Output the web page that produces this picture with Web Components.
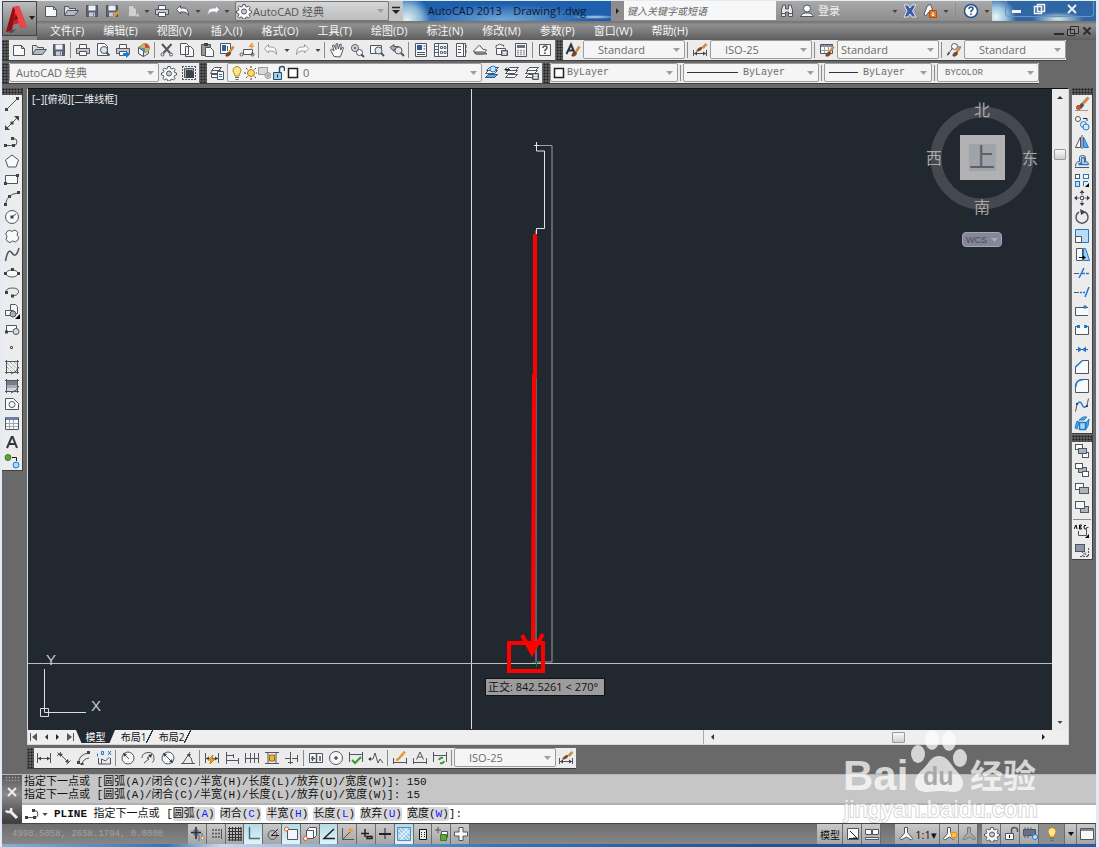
<!DOCTYPE html>
<html lang="zh-CN">
<head>
<meta charset="utf-8">
<title>AutoCAD 2013 Drawing1.dwg</title>
<style>
  html, body { margin: 0; height: 100%; }
  body { background: #e3ebf6; font-family: "Open Sans", "Noto Sans CJK SC", sans-serif; font-size: 11px; color: #222; }
</style>
</head>
<body>
<cad-app></cad-app>

<script>
const D = 'fill="#3d424c" stroke="none"';
const W = 'fill="#f8f9fa"';
const G = 'fill="#a9adb5"';
const B = 'stroke="#1c7ad0"';
const page = `<path ${W} d="M2.500 3.500h8l3 3v7h-11z"/><path d="M10.500 3.500v3h3"/>`;
const brush = `<path d="M14.500 4.500l-4 6" stroke="#c98a4a" stroke-width="2.500"/><path d="M7 14c0-3 2-4 4-3.500 1 2-1 4-4 3.500z" fill="#8a4a1c" stroke="#6d3813"/>`;
const gear = `<path ${W} d="M6.800 1.500h2.400l.4 1.900 1.300.6 1.700-1 1.500 1.600-1 1.700.5 1.200 2 .5v2l-2 .5-.5 1.200 1 1.700-1.500 1.600-1.700-1-1.300.6-.4 1.400H6.800l-.4-1.500-1.300-.6-1.700 1-1.500-1.500 1-1.700-.5-1.200-1.900-.5V8l1.900-.5.5-1.200-1-1.700 1.500-1.600 1.700 1 1.300-.6z"/><circle cx="8" cy="8.500" r="2.500" fill="#c9ccd1"/>`;
const dim = `<path d="M1.500 3v10M14.500 3v10M2 8.500h12"/><path ${D} d="M2 8.500l3-2v4zM14 8.500l-3-2v4z"/>`;
const lens = (x, y) => `<circle cx="${x}" cy="${y}" r="3.500" fill="#dfe6ee"/><path d="M${x + 2.5} ${y + 2.5}l3 3" stroke-width="2"/>`;
const floppy = `<path d="M2.500 2.500h11v11h-11z" fill="#596273"/><path d="M4.500 2.500h7v5h-7z" fill="#eef1f5" stroke="none"/><path d="M5 9.500h6v4H5z" fill="#c8ced8" stroke="none"/><path d="M9.500 10.500v2"/>`;
const printer = `<path ${W} d="M4.500 2.500h7v4h-7z"/><path d="M1.500 6.500h13v5h-13z" fill="#c5c8ce"/><path ${W} d="M4.500 9.500h7v4h-7z"/>`;
const undo = `<path ${W} d="M1.500 6.500l4-4v2.500h3.500q4.500 0 4.500 7.500-1-3-4.500-3.500h-3.500v2z"/>`;
const redo = `<path ${W} d="M14.500 6.500l-4-4v2.500h-3.500q-4.500 0-4.500 7.500 1-3 4.500-3.500h3.500v2z"/>`;
const layers = `<path ${W} d="M5.500 2.500h9l-3 3h-9zM4.500 5.500h9l-3 3h-9zM4.500 9.500h9l-3 3h-9z"/>`;
const sq = (x, y, w, h, f) => `<rect x="${x}.5" y="${y}.5" width="${w}" height="${h}" fill="${f}"/>`;

const ICONS = {
  new: page,
  open: `<path d="M1.500 12.500v-9h4l1 2h6v2" fill="#d9dce1"/><path d="M1.500 12.500l3-5h11l-4 5z" fill="#b3bac6"/>`,
  save: floppy,
  saveas: floppy + `<path d="M14.500 8l-5 6" stroke="#e19a35" stroke-width="2.500"/>`,
  plotgrey: `<path d="M3.500 13.500v-11h4l4 4v7z" fill="#d0d0d0" stroke="#999"/><path d="M10.500 13.500l2-4 2 4z" stroke="#aaa" fill="#ddd"/>`,
  print: printer, undo, redo,
  undooff: `<g stroke="#9a9da3">${undo}</g>`, redooff: `<g stroke="#9a9da3">${redo}</g>`,
  preview: `<path ${W} d="M2.500 1.500h7l3 3v9h-10z"/>` + lens(9, 8),
  publish: printer + `<path d="M8 11h3v-2l4 3.500-4 3.500v-2H8z" fill="#1c7ad0" stroke="none"/>`,
  dwf: `<path d="M3.500 5.500l5-3 5 3v6l-5 3-5-3z" fill="#e4e7ea"/><circle cx="10" cy="6" r="4.500" fill="#d8b24a" stroke="#8a8"/><path d="M10 1.500v4.500h4.500a4.500 4.500 0 0 0-4.500-4.500" fill="#d94b3a" stroke="none"/><path d="M6 6h4v4.500A4.500 4.500 0 0 1 6 6" fill="#3f9ad0" stroke="none"/><path d="M3.500 5.500v6l5 3V9z" ${W}/>`,
  cut: `<path d="M3 2l8 9M12.500 2L4.500 11" stroke-width="2"/><circle cx="3.500" cy="12.500" r="1.500"/><circle cx="12" cy="12.500" r="1.500"/>`,
  copy: `<path ${W} d="M1.500 1.500h6l2 2v9h-8zM6.500 4.500h5l3 3v7h-8z"/>`,
  paste: `<path d="M2.500 2.500h9v11h-9z" fill="#a09683"/><path d="M5 1h4v3H5z" ${D}/><path ${W} d="M6.500 5.500h5l3 3v6h-8z"/>`,
  match: `<path d="M1.500 1.500h10v10h-10z" ${W}/><path d="M3 3h4v6H3z" fill="#31649f" stroke="none"/><path d="M8.500 4v5"/>` + brush,
  block: `<path ${W} d="M4.500 7.500h9v5h-9z"/><circle cx="2.500" cy="12.500" r="1.500"/><circle cx="13.500" cy="12.500" r="1.500"/><path d="M12.500 1l-3 4h3l-2 3.500 5-5h-3l2-2.500z" fill="#f0962a" stroke="none"/>`,
  pan: `<path ${W} d="M5 14.500L1.500 8l1-1L5 9 3.500 3.500l1.500-.5 2 4.500V2l1.500-.5.8 5.500 1.700-5 1.300.5-.8 5.500 2-3 1 .7-2 6.300-1.500 3z"/>`,
  zoomrt: lens(6, 6) + `<path d="M4.500 6h3M6 4.500v3" /><circle cx="10.500" cy="10.500" r="3" ${W}/><path d="M12.500 12.500l2.500 2.500" stroke-width="2"/>`,
  zoomwin: `<path ${W} d="M1.500 3.500h11v8h-11z"/>` + lens(9.500, 8.500),
  zoomprev: `<path ${G} d="M1 5.500l4-3v2h5v3H5v2z"/>` + lens(9.500, 8.500),
  props: `<path ${W} d="M2.500 1.500h11v13h-11z"/><path d="M4 3h5v5H4z" fill="#2d5c96" stroke="none"/><path d="M10.500 4h2M10.500 7h2M4 10.500h8M4 12.500h8"/>`,
  dc: `<path ${W} d="M1.500 1.500h13v13h-13z"/><path d="M5.500 2v12M7.500 4.500h2v2h-2zM11 4.500h2v2h-2zM7.500 9.500h2v2h-2zM11 9.500h2v2h-2zM2 4.500h3M2 7.500h3M2 10.500h3" stroke="#59677c"/>`,
  palettes: `<path ${W} d="M3.500 1.500h9v13h-9z"/><path d="M10.500 2v12M5 4.500h3M5 7.500h3M5 10.500h3M13 3v3M13 8v3"/>`,
  sheets: `<path d="M2.500 7l4-4 3 4 4 1-3 4h-8l-2-3z" ${W}/><path d="M1 10h10l3 2H4z" ${G}/>`,
  markup: `<path d="M3 6q-1-3 2-3 2-2 3 0 3-1 3 2" ${W}/><path ${W} d="M3.500 6.500h9v6h-9z"/><path d="M8.500 8.500h6v5h-6z" ${G}/><path d="M10 10.500h3M10 12h3" stroke="#fff"/>`,
  calc: `<path ${W} d="M2.500 1.500h11v13h-11z"/><path d="M4 3h8v3H4z" fill="#68707e" stroke="none"/><path d="M4.500 8.500h1M7.500 8.500h1M10.500 8.500h1M4.500 10.500h1M7.500 10.500h1M10.500 10.500h1M4.500 12.500h1M7.500 12.500h1M10.500 12.500h1" stroke-width="1.500"/>`,
  help: `<path ${W} d="M2.500 2.500h11v11h-11z"/><path d="M6 6q0-2 2-2t2 1.700q0 1-2 2.500v1" stroke-width="1.500"/><path d="M7.200 10.500h1.600v1.500H7.200z" ${D}/>`,
  textstyle: `<path d="M1.500 12L6 2.500 10 12M3 8.500h5.500" stroke-width="2" stroke="#30343b"/>` + brush,
  dimstyle: `<path d="M1.500 8v6M14.500 8v6M2 11.500h12"/><path ${D} d="M2 11.500l3-2v4zM14 11.500l-3-2v4z"/><path d="M14.500 2l-4 4" stroke="#c98a4a" stroke-width="2.500"/><path d="M4 9.500c1-3 4-5 6-4.500 1 2-2 5-6 4.500z" fill="#8a4a1c" stroke="none"/>`,
  tablestyle: `<path ${W} d="M1.500 2.500h12v9h-12z"/><path d="M2 3h11v2H2z" fill="#858c99" stroke="none"/><path d="M5.500 3v8M9.500 3v8M2 8.500h11" stroke="#9aa0ab"/>` + brush,
  leaderstyle: `<circle cx="8.500" cy="4.500" r="3" ${W}/><path d="M1.500 13l5-7M12 5h3"/><path ${D} d="M1 14l1-4 2 1.500z"/>` + brush,
  gear,
  gearsave: `<path ${G} d="M3.500 3.500h9v9h-9z"/><path ${D} d="M5 5h6l2 3v5H5z"/><path d="M1.500 1v14M14.500 1v14M1 1.500h14M1 14.500h14" stroke-dasharray="2 1"/>`,
  layerprops: `<path ${W} d="M5.500 2.500h7l-3 3h-7zM3.500 5.500h8l-3 3h-7zM2.500 9.500h6v3h-6z"/><path ${W} d="M8.500 6.500h6v8h-6z"/><path d="M10 9.500h3M10 11.500h3" ${B}/>`,
  layercur: layers + `<circle cx="9" cy="4" r="3" stroke="#1c7ad0" fill="#cfe6f8"/><path d="M4.500 9.500h9l-3 3h-9z" fill="#6aa9de" stroke="#1c5f9f"/>`,
  layerprev: layers + `<path d="M1 4.500h5M1 4.500l2-2M1 4.500l2 2" stroke="#222"/>`,
  layerstate: layers + `<path d="M8.500 8.500h6v6h-6z" ${G}/><path d="M10 10.500h3M10 12.500h3" stroke="#fff"/>`,
  bulb: `<path d="M6 11q0-2-1.500-3.500a4 4 0 1 1 7 0Q10 9 10 11z" fill="#ffe58a" stroke="#b0862a"/><path d="M6 12.500h4M6.500 14.500h3" stroke="#666"/>`,
  sun: `<circle cx="8" cy="8" r="3.500" fill="#ffd969" stroke="#a97b20"/><path d="M8 1v2M8 13v2M1 8h2M13 8h2M3 3l1.500 1.500M11.500 11.500L13 13M13 3l-1.500 1.500M4.500 11.500L3 13" stroke="#444"/>`,
  vpfreeze: `<path d="M1.500 2.500h9v7h-9z" fill="#d6d8dc" stroke="#999"/><circle cx="11" cy="10.500" r="3" fill="#d2d4d8" stroke="#999"/><circle cx="11" cy="10.500" r="1" stroke="#999"/>`,
  lock: `<path d="M2.500 7.500h8v7h-8z" fill="#9fd0f0" stroke="#2a4a66"/><path d="M8.500 7V3.500q0-2 2.500-2t2.500 2V6" stroke="#2a4a66" stroke-width="1.500"/><path d="M6.500 9.500v3" stroke="#222"/>`,
  swatch: `<path d="M3.500 3.500h9v9h-9z" fill="#fff" stroke="#222" stroke-width="1.500"/>`,
  line: `<path d="M2.500 13.500l11-11"/><path ${D} d="M1 12h3v3H1zM12 1h3v3h-3z"/>`,
  xline: `<path d="M2.500 13.500l11-11"/><path ${D} d="M1 15v-5l5 5zM15 1v5l-5-5zM6.500 6.500h3v3h-3z"/>`,
  pline: `<path d="M1.500 11.500h8a3.500 3.500 0 0 0 0-7H8.500"/><path ${D} d="M0 10h3v3H0zM8 10h3v3H8zM7 3h3v3H7z"/>`,
  polygon: `<path ${W} d="M8 2l6.500 5-2.500 7H4L1.500 7z"/>`,
  rect: `<path ${W} d="M1.500 4.500h12v8h-12z"/><path ${D} d="M0 11h3v3H0zM12 3h3v3h-3z"/>`,
  arc: `<path d="M1.500 14Q3 4 14 3"/><path ${D} d="M0 13h3v3H0zM13 1h3v3h-3zM4 5h3v3H4z"/>`,
  circle: `<circle cx="8" cy="8" r="6.500" ${W}/><path d="M8 8l4-3"/><path ${D} d="M6.500 6.500h3v3h-3z"/>`,
  cloud: `<path ${W} d="M8 3.500a3 3 0 0 1 5 3.500 3.500 3.500 0 1 1-4.500 6 3.500 3.500 0 1 1-5.500-4.500 3.500 3.500 0 1 1 5-5z"/>`,
  spline: `<path d="M1.500 15Q4 1 8 7T15 2" stroke-width="1.500"/>`,
  ellipse: `<ellipse cx="8" cy="8.500" rx="6" ry="3.500" ${W}/><path ${D} d="M0 7h3v3H0zM13 7h3v3h-3zM7 3h3v3H7z"/>`,
  ellarc: `<path d="M2 8q0-4 6.500-4t6 4.500q-1 3-6 3.500" /><path ${D} d="M1 7h3v3H1zM7 10.500h3v3H7z"/>`,
  insert: `<path ${W} d="M6.500 1.500h5l2 2v7h-7z"/><path ${W} d="M1.500 7.500h8v5h-8z"/><circle cx="9" cy="11" r="3" ${G}/><path d="M16 11v5h-5z" fill="#000" stroke="none"/>`,
  makeblock: `<path ${W} d="M2.500 4.500h10v6h-10z"/><circle cx="12" cy="10.500" r="3" fill="#d7dadf"/><path ${D} d="M1 9.500h3v3H1z"/>`,
  point: `<path d="M6.500 6.500h2v2h-2z"/>`,
  hatch: `<path d="M1 2.500h14M1 13.500h14M2.500 1v14M13.500 1v14"/><path d="M3 4l9 9M3 8l5 5M6 3l7 7M10 3l3 3" stroke="#888" stroke-dasharray="1 1"/><path d="M7 15q6-2 8-7"/>`,
  gradient: `<path d="M3 3h10v4H3z" fill="#777f8b" stroke="none"/><path d="M3 7h10v3H3z" fill="#a6abb3" stroke="none"/><path d="M3 10h10v3H3z" fill="#d2d5d9" stroke="none"/><path d="M1 2.500h14M1 13.500h14M2.500 1v14M13.500 1v14M7 15q6-2 8-7"/>`,
  region: `<path ${W} d="M1.500 2.500h8l5 5v6h-13z"/><circle cx="8" cy="8.500" r="3"/>`,
  table: `<path ${W} d="M1.500 2.500h13v12h-13z"/><path d="M2 2h12v3H2z" fill="#6d7fa5" stroke="none"/><path d="M2 8.500h12M2 11.500h12M5.500 5v9M9.500 5v9" stroke="#a1a6af"/>`,
  mtext: `<path d="M3 14L7.700 3h1L13 14M4.500 10h7" stroke="#32363d" stroke-width="2"/>`,
  addsel: `<circle cx="4" cy="4.500" r="3" fill="#5aa63c" stroke="#3b7a24"/><circle cx="12" cy="12" r="3" fill="#a9d7f7" ${B}/><path d="M8 4.500h4.500V8" stroke="#222"/>`,
  erase: `<path d="M14.500 1.500L7 9.500" stroke="#c98a4a" stroke-width="3"/><path d="M9 8l-3.500 4" stroke="#555" stroke-width="3.500"/><circle cx="4.500" cy="11.500" r="2" fill="#e2541b" stroke="#b23c10"/><path d="M1 14.500h13" stroke="#999"/>`,
  copyobj: `<circle cx="4" cy="4" r="2.500" ${W}/><path d="M9 3.500h4V6" stroke="#222"/><circle cx="9.500" cy="9.500" r="3" fill="#d5ebfb" ${B}/><circle cx="12" cy="12" r="3" fill="#d5ebfb" ${B}/>`,
  mirror: `<path ${W} d="M6.500 3v10.500h-5z"/><path d="M9.500 3v10.500h5z" fill="#5aaae8" stroke="#1c7ad0"/><path d="M8 1v14"/>`,
  offset: `<path d="M1.500 13.500q0-5 4-5V4.500q0-2 3-2t3 2v4q3 0 3 3" /><path d="M4.500 11.500h10M4.500 11.500q1-1.500 3-1.500V5.500q0-1 1.500-1t1.500 1V10" ${B} stroke-width="1.500"/><path d="M1 14.500h14"/>`,
  array: sq(1, 2, 4, 4, '#fff') + `<g ${B}>${sq(9, 2, 5, 4, '#fff')}${sq(1, 9, 4, 5, '#bfe0f7')}</g><path d="M9.500 14V9.500H14" ${B}/><path d="M15 11v4h-4z" fill="#000" stroke="none"/>`,
  move: `<path d="M8 1.500v4M8 10.500v4M1.500 8h4M10.500 8h4M6.500 6.500h3v3h-3z"/><path ${D} d="M8 0l2.500 3h-5zM8 16l2.500-3h-5zM0 8l3-2.500v5zM16 8l-3-2.500v5z"/>`,
  rotate: `<path d="M5 3a6 6 0 1 0 6 0" stroke-width="1.500"/><path ${D} d="M6 0l6 3-5 3z"/>`,
  scale: `<path d="M1.500 1.500h13v13h-13z" fill="#b9dcf4" ${B}/><path ${W} d="M1.500 8.500h6v6h-6z"/>`,
  stretch: `<path ${W} d="M2.500 1.500h6v12h-6z"/><path d="M9.500 1.500h2l4 12h-6z" fill="#9fd0f2" ${B}/><path d="M5 10.500h5" stroke="#000"/><path d="M12 10.500l-3-2v4z" fill="#000" stroke="none"/>`,
  trim: `<path d="M0 8.500h5"/><path d="M5 13l5-10M8 8.500h3M12 8.500h3" ${B} stroke-width="1.500"/>`,
  extend: `<path d="M0 8.500h5"/><path d="M6 8.500h2M9 8.500h2M11 13l4-10" ${B} stroke-width="1.500"/>`,
  breakpt: `<path d="M14 4.500H1.500v8H14" ${W}/><path d="M9.500 2.500h3v3h-3z" fill="#1c7ad0" stroke="none"/>`,
  break: `<path d="M4 4.500H1.500v8h13v-8H12" ${W}/><path d="M3 3h3v3H3zM10 3h3v3h-3z" fill="#1c7ad0" stroke="none"/>`,
  join: `<path d="M2 8.500h12"/><path d="M8 8.500l-4-3v6zM8 8.500l4-3v6z" fill="#1c7ad0" stroke="none"/>`,
  chamfer: `<path ${W} d="M1.500 14.500V8l7-6.500h6v13z"/><path d="M1.500 8l7-6.500" ${B} stroke-width="1.500"/>`,
  fillet: `<path ${W} d="M1.500 14.500v-5q0-8 8-8h5v13z"/><path d="M1.500 9.500q0-8 8-8" ${B} stroke-width="1.500"/>`,
  blend: `<path d="M1.500 14.500l1.500-7M14.500 1.500l-1.500 7"/><path d="M3 7.500q3-5 5 0t5 1" ${B} stroke-width="1.500"/><path ${D} d="M2 6h2v2H2zM12 8h2v2h-2z"/>`,
  explode: `<path d="M5.500 6.500h6v7h-6z" fill="#a7d6f6" ${B} stroke-width="1.500"/><path d="M1 12l2-7 2 1-2 7zM5 4l4-3h4l-3 3zM12 7l3-4-1 7-2 3z" fill="#5aaae8" ${B}/>`,
  front: sq(1, 1, 7, 5, '#fff') + sq(8, 9, 6, 5, '#fff') + sq(4, 5, 8, 5, '#a7b3c4'),
  back: sq(4, 5, 8, 5, '#a7b3c4') + sq(1, 1, 7, 5, '#fff') + sq(8, 9, 6, 5, '#fff'),
  above: sq(1, 2, 8, 6, '#fff') + sq(5, 6, 9, 6, '#aeb3bb'),
  under: sq(6, 7, 8, 6, '#aeb3bb') + sq(1, 2, 9, 7, '#f4f5f7'),
  abc: `<path d="M0 6l2-4 1 4M5.500 2v4h2l-1-2 1-2zM12 2.500q-2-1-2 1.500t2 2" stroke="#000"/><path d="M4.500 8v4.500h8v-8h2"/><path d="M15 11v4h-4z" fill="#000" stroke="none"/>`,
  hatchback: sq(1, 2, 9, 7, '#8c96a6') + `<path d="M6 14.500h8.500V6M8 10l6 4M8 14l5-4" stroke-dasharray="2 1"/>`,
  dlinear: dim,
  daligned: `<path d="M1.500 2.500l3 3M10.500 14.500l4-4M4 4l8.500 8.500M1 6l4-4"/><path ${D} d="M3 3l4 1-3 3zM13 13l-4-1 3-3z"/>`,
  darc: `<path d="M2.500 13Q3 4 13 3M6 14q1-5 7-6"/><path ${D} d="M1 11h3v3H1zM11 1h3v3h-3zM4.500 13h3v2h-3z"/>`,
  dord: `<path d="M2.500 8v6h12V8M5.500 14V9l4 2 4-4"/><path d="M1.500 3.500v3M5.500 1.500h2v3h-2zM12 1l3 4M15 1l-3 4" ${B}/>`,
  dradius: `<circle cx="8" cy="8" r="6" ${W}/><path d="M4 4l5 5"/><path ${D} d="M3 3l4 1-3 3z"/>`,
  djog: `<path d="M2 8q0-5 6-5.500t6 6q0 2-1.500 4"/><path d="M12 5l-5 3 2 1-5 4"/><path ${D} d="M12 4l-4 1 3 3z"/>`,
  ddia: `<circle cx="8" cy="8" r="6" ${W}/><path d="M4 4l8 8"/><path ${D} d="M3 3l4 1-3 3zM13 13l-4-1 3-3z"/>`,
  dang: `<path d="M1 13.500h14M3 13L10 2M8 5q4 2 4.500 8"/><path ${D} d="M7 4h4l-2 3z"/>`,
  dquick: dim + `<path d="M9 5l-5 5h3l-1 4 5-5H8z" fill="#f5a623" stroke="#c97b12"/>`,
  dbase: `<path d="M2.500 2v12M9.500 4v4M14.500 8v6M3 5.500h6M3 10.500h11"/>`,
  dcont: `<path d="M1.500 3v10M6.500 3v10M10.500 3v10M14.500 3v10M2 8.500h12"/>`,
  dspace: `<path d="M1 2.500h14M1 13.500h14M4 3v10M12 3v10"/><path d="M5.500 5h5v6h-5z" fill="#f0b429" stroke="#a06c10"/>`,
  dbreak: `<path d="M6.500 2v12M1 8.500h5M8 8.500h6M13.500 5v7M4 12.500h5"/>`,
  tol: `<path ${W} d="M1.500 3.500h13v9h-13z"/><path d="M8.500 4v8M12 6v5M4.500 6v5M3 8.500h4" stroke-width="1.500"/>`,
  cmark: `<circle cx="8" cy="8" r="6.500" ${W}/><path d="M6 8h4M8 6v4" stroke-width="1.500"/>`,
  inspect: `<path d="M1.500 2v10M14.500 2v10M2 4.500h12"/><path d="M4 10l3 3 6-6" stroke="#2f9e2f" stroke-width="2"/>`,
  djogl: `<path d="M1 9h4l2-6 3 10 2-4 3 4"/><path ${D} d="M0 9l3-2v4z"/>`,
  dedit: `<path d="M1.500 8v6M14.500 8v6M2 12.500h12"/><path d="M13 1.500l-7 8-2 .5" stroke="#e19a35" stroke-width="2.500"/>`,
  dtedit: `<path d="M1.500 8v6M14.500 8v6M2 12.500h12M4.500 9.500L8 2l3.500 7.500M6 7h4"/>`,
  dupdate: `<path d="M1.500 2v10M14.500 2v10M2 5.500h12"/><path d="M7 10q1-3 4-2M12 11q-1 3-4 2" stroke="#2f9e2f" stroke-width="2"/>`,
  dots: `<path d="M4 4h9M4 7.500h9M4 11h9" stroke-dasharray="2 1" stroke-width="1.500"/><path d="M13.500 3v10"/>`,
  grid: `<path d="M1 2.500h14M1 5.500h14M1 8.500h14M1 11.500h14M1 14h14M2.500 1v14M5.500 1v14M8.500 1v14M11.500 1v14M14 1v14" stroke="#333"/>`,
  infer: `<path d="M7 1v12M2 6.500h10" stroke="#222" stroke-width="1.500"/><path d="M5 4h4v5H5z"/><path d="M10 9v6M13 7v5" stroke="#1c7ad0"/><circle cx="13.500" cy="12" r="1.500" fill="#fff" stroke="#e2741b"/>`,
  ortho: `<path d="M3.500 1v11.500H14" stroke="#476e7c" stroke-width="1.500"/>`,
  polar: `<circle cx="7.500" cy="9" r="4.500"/><path d="M6 10l7-7M7 9.500h7" stroke="#222"/>`,
  osnap: `<path d="M4.500 3.500h10v10h-10z" fill="#f0f6f9"/><circle cx="3.500" cy="3" r="2" fill="#fff" stroke="#e2541b"/>`,
  osnap3: `<path d="M4.500 4.500l3-3h7v8l-3 3h-7z" ${W}/><path d="M4.500 4.500h7v8"/><circle cx="3.500" cy="12.500" r="2" fill="#fff" stroke="#e2541b"/>`,
  otrack: `<path d="M13 3L3 12.500h11" stroke="#222" stroke-width="1.500"/>`,
  ducs: `<path d="M2.500 2v11.500H14M3 13l7-7"/><path d="M11 1l-3 4h3l-2 4 5-5h-3z" fill="#f0962a" stroke="none"/>`,
  dyn: `<path d="M6 3v8M2 7.500h8M8 10.500h5v2H8z" stroke="#222" stroke-width="1.500"/>`,
  lwt: `<path d="M8 2v11" stroke="#222"/><path d="M2 8h12" stroke="#222" stroke-width="2"/>`,
  tpy: `<path d="M1.500 1.500h13v13h-13z" fill="#9ec9ea" stroke="#5c8cb4"/><path d="M2 4l10 10M2 8l6 6M4 2l10 10M8 2l6 6M4 14L14 4M2 12L12 2" stroke="#eef7fd"/>`,
  qp: `<path d="M4.500 3.500h7v10h-7z" stroke="#111" fill="#eee"/><path d="M6.500 6v6M9.500 6v6" stroke="#111" stroke-dasharray="1 1"/>`,
  sc: `<path d="M4 1v6M1 4h6"/><path ${W} d="M7.500 5.500h6v6h-6z"/><path d="M6.500 8.500h6v6h-6z" fill="#5aa63c" stroke="#3b7a24"/>`,
  am: `<path ${W} d="M6 1.500h4V6h4.500v4H10v4.500H6V10H1.500V6H6z"/>`,
  layoutpage: `<path ${W} d="M2.500 2.500h11v11h-11z"/><path d="M5 5l7 7H8M4 12.500h9" stroke="#222"/>`,
  quickview: `<path ${W} d="M1.500 3.500h6v5h-6zM8.500 3.500h6v5h-6zM1.500 11.500h13v2h-13z"/>`,
  anno: `<path ${W} d="M6.500 1.500h3v5l5 6-1 1.500-5-3-5.500 3-1-1.500 4.500-5.500z"/>`,
  annovis: `<path ${W} d="M5.500 1.500h3v5l4 6-1 1-4-2.500-5 3-1-1.500 4-5z"/><circle cx="12" cy="9" r="3" fill="#ffbf3f" stroke="#d98f1a"/>`,
  annoauto: `<path fill="#aaa" stroke="#777" d="M6.500 1.500h3v5l5 6-1 1.500-5-3-5.500 3-1-1.500 4.500-5.500z"/>`,
  unlock: `<path ${W} d="M2.500 7.500h8v6h-8z"/><path d="M8.500 7V4q0-2.500 3-2.500t3 2.500v2" stroke-width="1.500"/><path d="M6.500 9v3" stroke="#111"/>`,
  hw: `<path d="M1.500 3.500h12v6h-12z" fill="#65718a"/><path d="M3 1.500v2M6 1.500v2M9 1.500v2M3 10v2M6 10v2"/><circle cx="13" cy="11" r="2.500" fill="#bde0f7" ${B}/>`,
  clean: `<path ${W} d="M1.500 2.500h13v11h-13z"/><path d="M2 3h12v2H2z" fill="#7c8795" stroke="none"/>`,
  binoc: `<path d="M2.500 7l1.500-5h2.500v4h3V2H12l1.500 5v6.500h-4V9h-3v4.500h-4z" fill="#e8e8e8"/><path d="M3 10.500h3M10 10.500h3"/>`,
  user: `<circle cx="8" cy="5.500" r="3.500" ${W}/><path ${W} d="M1.500 13.500q1-3 4.500-3.500h4q3.500.5 4.500 3.500z"/>`,
  exch: `<path d="M2 2h4l2 3 2-3h4l-3.500 6 3.500 6h-4l-2-3-2 3H2l3-6z" fill="#3c5da8" stroke="#dfe6f5"/>`,
  a360: `<path ${W} d="M5.500 2.500l3-1 2 5-3 2-4 4.500-1.500-2z"/><path d="M7.500 7.500h7v7h-7z" fill="#e8741c" stroke="#b4520b"/><path d="M11 9v4M9.500 11.500L11 13l1.500-1.500" stroke="#fff"/>`,
  qhelp: `<circle cx="8" cy="8" r="6.500" fill="#fff" stroke="#23528f" stroke-width="1.500"/><path d="M6 6q0-2 2-2t2 1.700q0 1-2 2.500v1" stroke="#23528f" stroke-width="1.500"/><path d="M7.200 10.500h1.600v1.500H7.200z" fill="#23528f" stroke="none"/>`,
  wrench: `<path d="M5.500 5.500l7.500 7.500" stroke="#eee" stroke-width="3"/><path d="M2 5.500q1 2 3.500 1.500T7 3" stroke="#eee" stroke-width="2.500"/>`,
  cross: `<path d="M4 4l8 8M12 4l-8 8" stroke="#eee" stroke-width="2"/>`,
  min: `<path d="M3 10.500h9" stroke="#f4f4f4" stroke-width="3"/>`,
  max: `<path d="M6.500 3.500h7v7h-7zM3.500 5.500h7v7h-7z" fill="#3b6ea5" stroke="#f4f4f4" stroke-width="1.500"/>`,
  mmin: `<path d="M3 11h10" stroke="#2b2b2b" stroke-width="2"/>`,
  mmax: `<path d="M5.500 3.500h8v7h-8zM2.500 6.500h7v6h-7z" fill="#888" stroke="#2b2b2b"/>`,
  mclose: `<path d="M4.500 4.500l7 7M11.500 4.500l-7 7" stroke="#2b2b2b" stroke-width="2"/>`,
  down: `<path d="M5.500 7h5L8 10z" fill="#444" stroke="none"/>`,
  downbar: `<path d="M4 4.500h8" stroke="#222" stroke-width="1.500"/><path d="M4 7h8l-4 4z" fill="#222" stroke="none"/>`,
  downbig: `<path d="M5 6h6l-3 4z" fill="#111" stroke="none"/>`,
  up: `<path d="M5 10h6L8 7z" fill="#333" stroke="none"/>`,
  left: `<path d="M10 5v6L7 8z" fill="#333" stroke="none"/>`,
  right: `<path d="M6 5v6l3-3z" fill="#222" stroke="none"/>`,
  first: `<path d="M4.500 4v8"/><path d="M11 4v8L6 8z" fill="#555" stroke="none"/>`,
  last: `<path d="M11.500 4v8"/><path d="M5 4v8l5-4z" fill="#555" stroke="none"/>`
};

/* Registers an element whose shadow root is cloned from a template. */
function define(name, markup, setup) {
  const tpl = document.createElement('template');
  tpl.innerHTML = markup;
  customElements.define(name, class extends HTMLElement {
    connectedCallback() {
      if (this.shadowRoot) return;
      const root = this.attachShadow({ mode: 'open' });
      root.append(tpl.content.cloneNode(true));
      if (setup) setup(this, root);
    }
  });
}

define('cad-icon', `
<style>
  :host { display: block; flex: none; width: 16px; height: 16px; overflow: hidden; white-space: normal; }
  svg { display: block; fill: none; stroke: #50555f; stroke-width: 1; }
</style>
<svg width="16" height="16" viewBox="0 0 16 16" aria-hidden="true"></svg>`,
(el, root) => { root.querySelector('svg').innerHTML = ICONS[el.getAttribute('name')] || ''; });

define('cad-tool', `
<style>
  :host { display: flex; width: 20px; min-height: 0; }
  :host([narrow]) { width: 11px; }
  button { flex: 1; min-width: 0; display: flex; align-items: center; justify-content: center; gap: 1px; padding: 0; border: 0; background: none; font: inherit; color: inherit; overflow: hidden; }
</style>
<button type="button"><slot></slot></button>`,
(el, root) => {
  const name = el.getAttribute('name');
  const icon = document.createElement('cad-icon');
  icon.setAttribute('name', name);
  root.querySelector('button').prepend(icon);
  if (!el.textContent.trim()) root.querySelector('button').setAttribute('aria-label', name);
});

define('cad-sep', `
<style>
  :host { display: block; flex: none; width: 4px; }
  :host([wide]) { width: 5px; }
  i { display: block; width: 1px; height: 16px; margin: 2px 1px; background: #8b8b8b; }
  :host([wide]) i { margin: 2px; }
  :host([flat]) { width: auto; height: 5px; }
  :host([flat]) i { width: auto; height: 1px; margin: 2px 1px; }
</style><i></i>`);

/* Toolbar with a drag grip; tools="a b | c" lists buttons, "v" is a flyout arrow. */
define('cad-bar', `
<style>
  :host { display: flex; box-sizing: border-box; background: #ececec; border-bottom: 1px solid #3f3f3f; height: 21px; }
  :host([vertical]) { flex-direction: column; width: 21px; height: auto; border-right: 1px solid #3f3f3f; }
  .grip { flex: none; width: 7px; background: radial-gradient(circle, #1e1e1e 30%, #5a5a5a 60%) 0 0 / 3px 3px; }
  :host([vertical]) .grip { width: auto; height: 7px; }
  .tools { display: flex; }
  :host([vertical]) .tools { flex: 1; flex-direction: column; min-height: 0; }
  :host([vertical]) cad-tool { flex: 1; }
  slot { display: contents; }
</style>
<div class="grip"></div><div class="tools"></div><slot></slot>`,
(el, root) => {
  const flat = el.hasAttribute('vertical') ? ' flat' : '';
  root.querySelector('.tools').innerHTML = (el.getAttribute('tools') || '').split(' ').filter(Boolean)
    .map(t => t === '|' ? `<cad-sep${flat}></cad-sep>` : t === 'v' ? '<cad-tool narrow name="down"></cad-tool>' : `<cad-tool name="${t}"></cad-tool>`).join('');
});

define('cad-combo', `
<style>
  :host { display: flex; align-items: center; box-sizing: border-box; position: relative; height: 19px; background: #f5f5f5; border: 1px solid #9c9c9c; border-radius: 2px; color: #6c6c6c; }
  select { flex: 1; align-self: stretch; min-width: 0; appearance: none; border: 0; background: none; margin: 0; padding: 0 16px 0 var(--indent, 4px); font: inherit; color: inherit; }
  svg { position: absolute; right: 4px; top: 7px; pointer-events: none; }
</style>
<slot></slot><select></select>
<svg width="7" height="5" viewBox="0 0 7 5" aria-hidden="true"><path d="M0 0h7L3.500 4z" fill="#9f9f9f"/></svg>`,
(el, root) => {
  const s = root.querySelector('select');
  s.setAttribute('aria-label', el.getAttribute('label'));
  s.add(new Option(el.getAttribute('value')));
});

define('cad-title', `
<style>
  :host { display: flex; height: 39px; background: #8a8a8a; }
  .app { width: 35px; height: 35px; box-sizing: border-box; display: flex; align-items: center; justify-content: center; border: 1px solid #444; padding: 0; background: linear-gradient(#bdbdbd, #6f6f6f); }
  .rows { flex: 1; min-width: 0; display: flex; flex-direction: column; }
  .top { display: flex; height: 20px; background: linear-gradient(#a9a9a9, #8d8d8d); }
  .qat { display: flex; padding-left: 4px; width: 195px; box-sizing: border-box; justify-content: space-between; }
  .qat cad-tool[narrow] { width: 9px; }
  .ws { width: 154px; --indent: 1px; height: 20px; background: linear-gradient(#d6d6d6, #bdbdbd); color: #555; margin-left: 3px; border-color: #777; }
  .more { width: 14px; background: #c4c4c4; }
  h1 { margin: 0; width: 208px; font-size: 11px; font-weight: 400; line-height: 20px; color: #0c1a2c; text-align: center; white-space: pre;
    background: radial-gradient(circle at 4px 19px, #e5f3f0 0, #8ab8d8 14px, transparent 24px), radial-gradient(ellipse at 192px 16px, #bfd8ec 0, transparent 24px), radial-gradient(ellipse at 100px 18px, #6fa6d8 0, transparent 90px), #1e5fae; }
  .find { width: 13px; background: #8d8d8d; }
  input { width: 152px; box-sizing: border-box; height: 19px; border: 0; background: #f7f7f7; padding: 0 3px; font: italic 10px "Open Sans", "Noto Sans CJK SC", sans-serif; }
  input::placeholder { color: #666; opacity: 1; }
  .info { flex: 1; display: flex; color: #fff; min-width: 0; padding-left: 1px; }
  .info a { color: #f2f2f2; text-decoration: none; line-height: 20px; flex: 1; padding-left: 1px; }
  .info cad-sep { margin: 0 3px; }
  .win { width: 104px; display: flex; background: radial-gradient(circle at 4px 16px, #eaf6f4 0, #9cc4e0 10px, transparent 20px), radial-gradient(ellipse at 66px 18px, #d6ebe6 0, transparent 26px), #2f66a6; }
  .win div { flex: 1; display: flex; margin: 0 2px 4px 13px; border: 1px solid #6d93bd; border-top: 0; border-radius: 0 0 4px 4px; }
  .win cad-tool { width: 22px; } .win cad-tool:last-child { flex: 1; }
  nav { display: flex; height: 19px; background: linear-gradient(#717171, #8f8f8f 20%, #5e5e5e); padding: 0 2px 0 13px; gap: 19px; align-items: center; }
  nav button { border: 0; padding: 0; background: none; font: inherit; font-size: 11px; line-height: 18px; color: #f6f6f6; white-space: nowrap; }
  nav div { margin-left: auto; display: flex; } nav cad-tool { width: 14px; }
</style>
<button class="app" type="button" aria-label="应用程序菜单">
  <svg width="32" height="32" viewBox="0 0 32 32"><path d="M2 29L9 4l6-1 8 21-6 1-2-5-6 2-2 6z" fill="#d3222a"/><path d="M9 4l6-1 8 21-6 1z" fill="#e9474a"/><path d="M2 29L9 4l2 3-3 20z" fill="#8e0f17"/><path d="M10 17l2-6 2 5z" fill="#7a1014"/><path d="M4 29l8-3-4 4z" fill="#444"/><path d="M25 13h6l-3 4z" fill="#222"/></svg>
</button>
<div class="rows">
  <div class="top">
    <div class="qat"><cad-tool name="new"></cad-tool><cad-tool name="open"></cad-tool><cad-tool name="save"></cad-tool><cad-tool name="saveas"></cad-tool><cad-tool name="plotgrey"></cad-tool><cad-tool narrow name="down"></cad-tool><cad-tool name="print"></cad-tool><cad-tool name="undo"></cad-tool><cad-tool narrow name="down"></cad-tool><cad-tool name="redooff"></cad-tool><cad-tool narrow name="down"></cad-tool></div>
    <cad-combo class="ws" label="工作空间" value="AutoCAD 经典"><cad-icon name="gear"></cad-icon></cad-combo>
    <cad-tool class="more" name="downbar"></cad-tool>
    <h1>AutoCAD 2013    Drawing1.dwg</h1>
    <cad-tool class="find" name="right"></cad-tool>
    <input type="search" aria-label="搜索" placeholder="键入关键字或短语">
    <div class="info"><cad-tool name="binoc"></cad-tool><cad-tool name="user"></cad-tool><a href="#">登录</a><cad-tool narrow name="down"></cad-tool><cad-tool name="exch"></cad-tool><cad-tool name="a360"></cad-tool><cad-tool narrow name="down"></cad-tool><cad-sep></cad-sep><cad-tool name="qhelp"></cad-tool><cad-tool narrow name="down"></cad-tool></div>
    <div class="win"><div><cad-tool name="min"></cad-tool><cad-tool name="max"></cad-tool><cad-tool name="cross"></cad-tool></div></div>
  </div>
  <nav aria-label="菜单">
    <button>文件(F)</button><button>编辑(E)</button><button>视图(V)</button><button>插入(I)</button><button>格式(O)</button><button>工具(T)</button><button>绘图(D)</button><button>标注(N)</button><button>修改(M)</button><button>参数(P)</button><button>窗口(W)</button><button>帮助(H)</button>
    <div><cad-tool name="mmin"></cad-tool><cad-tool name="mmax"></cad-tool><cad-tool name="mclose"></cad-tool></div>
  </nav>
</div>`);

define('cad-cube', `
<style>
  :host { display: block; width: 120px; }
  svg { display: block; }
  text { font-family: "Noto Sans CJK SC", sans-serif; font-size: 16px; fill: #a6a7aa; text-anchor: middle; }
  .top { font-family: "Noto Sans CJK SC", serif; font-size: 26px; fill: #5d6066; }
  button { display: flex; align-items: center; justify-content: space-between; width: 40px; height: 15px; margin: 14px auto 0; padding: 0 3px; border: 1px solid #a5a6b4; border-radius: 4px; background: #858698; color: #494a58; font: 9px "Liberation Sans", sans-serif; }
</style>
<svg width="120" height="128" viewBox="0 -10 120 128">
  <circle cx="60" cy="58" r="46" fill="none" stroke="#45484f" stroke-width="11"/>
  <path d="M38 35h45v45H38z" fill="#b1b1b3"/><path d="M47 44h27v27H47z" fill="#a0a3a8"/>
  <text x="60" y="16">北</text><text x="60" y="113">南</text><text x="12" y="64">西</text><text x="108" y="64">东</text>
  <text class="top" x="60" y="67">上</text>
</svg>
<button type="button">WCS<svg width="7" height="4" viewBox="0 0 7 4"><path d="M0 0h7L3.500 4z" fill="#a9aab8"/></svg></button>`);

define('cad-canvas', `
<style>
  :host { display: block; position: relative; overflow: hidden; background: #212830; }
  .draw { position: absolute; inset: 0; width: 100%; height: 100%; }
  .view { position: absolute; left: 4px; top: 3px; color: #ededed; font: 10px/14px "Noto Sans", "Noto Sans CJK SC", sans-serif; white-space: nowrap; }
  cad-cube { position: absolute; right: 10px; top: 1px; }
  .ucs { position: absolute; left: 10px; bottom: 9px; }
  .ucs text { font: 15px "Liberation Sans", sans-serif; fill: #c9cbce; }
  .tip { position: absolute; left: 457px; top: 589px; height: 16px; line-height: 16px; padding: 0 6px 0 2px; border: 1px solid #111; background: #9c9c9c; color: #111; font-size: 11px; white-space: nowrap; }
</style>
<svg class="draw" aria-hidden="true" fill="none">
  <path d="M508 56.500h16V573H508V141" stroke="#9a9da2"/>
  <path d="M508.500 53v9h8v77.500h-8v6" stroke="#e3e3e3"/>
  <path d="M506 56.500h5" stroke="#e3e3e3"/>
  <path d="M443.500 0v640" stroke="#d8dadd"/><line x1="0" x2="100%" y1="574.500" y2="574.500" stroke="#b9bcc0"/>
  <path d="M508.500 565v5" stroke="#b030b0"/>
  <path d="M507 145v142h-1l-1 270" stroke="#f00" stroke-width="4"/>
  <path d="M494 546l10 18 11-19" stroke="#f00" stroke-width="4"/><path d="M498 555h12l-6 13z" fill="#f00"/>
  <path d="M481 554h34v28h-34z" stroke="#f00" stroke-width="4"/>
  <path d="M504 573.500h4M508.500 572v6" stroke="#0a7a20"/>
</svg>
<div class="view">[−][俯视][二维线框]</div>
<cad-cube></cad-cube>
<svg class="ucs" width="70" height="76" viewBox="0 -10 70 76" aria-hidden="true"><path d="M2.500 53.500h8v8h-8zM6.500 14v43.500H48" fill="none" stroke="#dcdcdc"/><text x="8" y="10">Y</text><text x="53" y="56">X</text></svg>
<div class="tip">正交: 842.5261 &lt; 270°</div>`);

define('cad-view', `
<style>
  :host { display: grid; grid-template-columns: 1fr 16px; grid-template-rows: 1fr 14px; border: 1px solid #d6d6d6; border-top: 1px solid #111; box-sizing: border-box; min-width: 0; }
  .vs { background: #ececec; display: flex; flex-direction: column; align-items: center; }
  .vs b { width: 12px; height: 11px; margin-top: 44px; }
  b { display: block; box-sizing: border-box; border: 1px solid #999; border-radius: 1px; background: linear-gradient(#fafafa, #d0d0d0); }
  .vs cad-icon:last-child { margin-top: auto; }
  .tabs { grid-column: 1 / 3; display: flex; background: #efefef; overflow: hidden; }
  .tabs cad-tool { width: 12px; }
  .tab { width: 39px; height: 13px; margin-right: -1px; border: 0; padding: 0; font: inherit; font-size: 10px; line-height: 12px; color: #111; background: linear-gradient(115deg, transparent 84%, #333 84%, #333 87%, transparent 87%); white-space: nowrap; }
  .tab.on { background: #212830; color: #fff; clip-path: polygon(0 0, 100% 0, 86% 100%, 14% 100%); }
  .hs { margin-left: auto; width: 364px; display: flex; align-items: center; border-left: 1px solid #aaa; }
  .hs b { width: 13px; height: 11px; margin: 0 131px 0 auto; }
  .hs::after { content: ""; width: 16px; }
</style>
<cad-canvas></cad-canvas>
<div class="vs"><cad-icon name="up"></cad-icon><b></b><cad-icon name="down"></cad-icon></div>
<div class="tabs"><cad-tool name="first"></cad-tool><cad-tool name="left"></cad-tool><cad-tool name="right"></cad-tool><cad-tool name="last"></cad-tool>
  <button class="tab on">模型</button><button class="tab">布局1</button><button class="tab">布局2</button>
  <div class="hs"><cad-icon name="left"></cad-icon><b></b><cad-icon name="right"></cad-icon></div></div>`);

define('cad-command', `
<style>
  :host { display: flex; height: 49px; border-top: 1px solid #b5b5b5; box-sizing: border-box; font: 11px/13px "Liberation Mono", "Noto Sans CJK SC", monospace; color: #111; }
  .side { width: 20px; display: flex; flex-direction: column; align-items: center; justify-content: space-between; background: linear-gradient(#5a5a5a, #8a8a8a 40%, #3c3c3c); }
  .side i { width: 15px; height: 5px; background: radial-gradient(circle, #aaa 30%, transparent 50%) 0 0 / 3px 3px; margin-top: 1px; }
  .side cad-tool { height: 20px; width: 18px; }
  .main { flex: 1; min-width: 0; display: flex; flex-direction: column; }
  .log { background: #c6c6c6; height: 30px; padding: 1px 0 0 2px; box-sizing: border-box; border-bottom: 2px solid #b0b0b0; }
  .log p { margin: 0; height: 13px; white-space: pre; }
  label { flex: 1; display: flex; align-items: center; background: #fff; padding-left: 3px; white-space: pre; }
  label button { border: 0; border-radius: 3px; background: #d8d8d8; padding: 0; margin-right: 5px; height: 14px; font: inherit; color: inherit; }
  label button:last-of-type { margin-right: 0; }
  em { font-style: normal; color: #1a1aff; }
  input { flex: 1; border: 0; min-width: 0; background: none; outline: 0; }
  .dd { margin: 0 1px 0 -4px; }
</style>
<div class="side"><i></i><cad-tool name="cross"></cad-tool><cad-tool name="wrench"></cad-tool></div>
<div class="main">
  <div class="log"><p>指定下一点或 [圆弧(A)/闭合(C)/半宽(H)/长度(L)/放弃(U)/宽度(W)]: 150</p><p>指定下一点或 [圆弧(A)/闭合(C)/半宽(H)/长度(L)/放弃(U)/宽度(W)]: 15</p></div>
  <label><cad-icon name="pline"></cad-icon><cad-icon class="dd" name="down"></cad-icon><strong>PLINE</strong> 指定下一点或 [<button>圆弧(<em>A</em>)</button><button>闭合(<em>C</em>)</button><button>半宽(<em>H</em>)</button><button>长度(<em>L</em>)</button><button>放弃(<em>U</em>)</button><button>宽度(<em>W</em>)</button>]:<input aria-label="命令行"></label>
</div>`);

define('cad-status', `
<style>
  :host { display: flex; height: 21px; border-top: 1px solid #444; box-sizing: border-box; background: linear-gradient(#6e6e6e, #868686); }
  output { width: 186px; padding-left: 10px; box-sizing: border-box; font: 9px/20px "Liberation Mono", monospace; color: #a3a3a3; white-space: nowrap; }
  .modes { display: flex; width: 282px; }
  .modes cad-tool { flex: 1; min-width: 0; }
  cad-tool { background: linear-gradient(#c9c9c9, #a6a6a6); box-shadow: inset -1px 0 #6c6c6c; color: #111; width: 19px; }
  cad-tool[on] { background: linear-gradient(#b4dbe6, #e2f3f7); }
  .right { margin-left: auto; display: flex; }
  .model { width: 26px; border: 0; padding: 0; background: linear-gradient(#c9c9c9, #a6a6a6); box-shadow: inset -1px 0 #6c6c6c; font: inherit; font-size: 10px; color: #111; }
  .gap { width: 14px; } .gap.s { width: 4px; }
  .scale { width: 45px; } .bulb { width: 26px; background: #8e8e8e; } .dd { width: 12px; }
</style>
<output>4998.5058, 2658.1794, 0.0000</output>
<div class="modes"></div>
<div class="right"><button class="model">模型</button><cad-tool name="layoutpage"></cad-tool><cad-tool name="quickview"></cad-tool><span class="gap"></span>
<cad-tool class="scale" name="anno">1:1▾</cad-tool><cad-tool name="annovis"></cad-tool><cad-tool name="annoauto"></cad-tool><span class="gap s"></span>
<cad-tool name="gear"></cad-tool><cad-tool name="unlock"></cad-tool><cad-tool name="hw"></cad-tool><cad-tool class="bulb" name="bulb"></cad-tool><cad-tool class="dd" name="downbig"></cad-tool><cad-tool name="clean"></cad-tool></div>`,
(el, root) => {
  const on = ['ortho', 'osnap', 'otrack', 'tpy'];
  root.querySelector('.modes').innerHTML = 'infer dots grid ortho polar osnap osnap3 otrack ducs dyn lwt tpy qp sc am'.split(' ')
    .map(n => `<cad-tool name="${n}"${on.includes(n) ? ' on' : ''}></cad-tool>`).join('');
});

define('baidu-mark', `
<style>
  :host { display: block; width: 204px; height: 100px; pointer-events: none; }
  svg { display: block; overflow: visible; }
  text { fill: #fff; }
</style>
<svg width="204" height="100" viewBox="0 0 204 100" role="img">
  <g opacity=".72" fill="#fff">
    <text x="3" y="65" font-family="Liberation Sans, sans-serif" font-weight="700" font-size="42">Bai</text>
    <ellipse cx="78" cy="29" rx="7" ry="9"/><ellipse cx="92" cy="15" rx="7" ry="10"/><ellipse cx="109" cy="16" rx="7" ry="10"/><ellipse cx="120" cy="33" rx="7" ry="9"/>
    <path d="M99 31c8 0 11 7 15 12s9 9 9 15c0 8-6 9-11 9-5-1-8-1-13-1s-7 1-12 1c-6 0-12-2-12-9 0-6 4-10 9-15s7-12 15-12z"/>
    <text x="130" y="63" font-family="Noto Sans CJK SC, sans-serif" font-weight="700" font-size="33">经验</text>
  </g>
  <text x="83" y="60" font-family="Liberation Sans, sans-serif" font-weight="700" font-size="25" style="fill:#a8a8a8">du</text>
  <text x="4" y="92" font-family="Liberation Sans, sans-serif" font-size="24" opacity=".7" stroke="#c4c4c4" stroke-width="2" paint-order="stroke">jingyan.baidu.com</text>
</svg>`);

define('cad-app', `
<style>
  :host { display: flex; flex-direction: column; box-sizing: border-box; position: relative; min-height: 100vh; padding: 1px 3px 0 2px; overflow: hidden; }
  .rows { display: flex; flex-direction: column; gap: 2px; background: #696969; padding-top: 0; }
  .row { display: flex; align-items: flex-start; gap: 1px; height: 21px; }
  .work { flex: 1; display: flex; min-height: 0; background: #696969; padding: 4px 0 3px; align-items: flex-start; }
  cad-view { flex: 1; align-self: stretch; margin: 0 3px 0 4px; }
  .draw { height: 383px; } .mod { height: 346px; } .order { height: 125px; margin-top: 1px; }
  .right { width: 24px; }
  .std { --indent: 14px; width: 102px; } .std2 { --indent: 3px; width: 102px; }
  .w1 { width: 150px; --indent: 6px; } .layer { width: 255px; } .layer cad-icon { width: 14px; } .layer cad-icon:first-child { margin-left: 1px; }
  .color { width: 128px; } .lt { width: 136px; } .lw { width: 108px; }
  .by { font-family: "Liberation Mono", monospace; font-size: 10px; --indent: 5px; } .color { --indent: 0px; }
  .lt i { width: 51px; height: 1px; background: #333; margin-left: 3px; } .lw i { width: 29px; height: 1px; background: #333; margin-left: 4px; }
  .bc { width: 102px; font-family: "Liberation Mono", monospace; font-size: 9px; --indent: 7px; }
  .dims { background: #696969; padding: 0 0 5px 25px; display: flex; }
  .task { height: 3px; background: linear-gradient(90deg, #7fb2d8, #2d78b8 15%, #bcdcf0 20%, #2d78b8 45%, #1b5695 70%, #1f5fa5); }
  baidu-mark { position: absolute; right: 55px; bottom: 22px; }
</style>
<cad-title></cad-title>
<div class="rows">
  <div class="row">
    <cad-bar tools="new open save | print preview publish dwf | cut copy paste match block | undooff v redooff v | pan zoomrt zoomwin zoomprev | props dc palettes sheets markup calc | help"></cad-bar>
    <cad-bar tools="textstyle"><cad-combo class="std" label="文字样式" value="Standard"></cad-combo><cad-sep wide></cad-sep>
      <cad-tool name="dimstyle"></cad-tool><cad-combo class="std" label="标注样式" value="ISO-25"></cad-combo><cad-sep wide></cad-sep>
      <cad-tool name="tablestyle"></cad-tool><cad-combo class="std2" label="表格样式" value="Standard"></cad-combo><cad-sep wide></cad-sep>
      <cad-tool name="leaderstyle"></cad-tool><cad-combo class="std" label="引线样式" value="Standard"></cad-combo></cad-bar>
  </div>
  <div class="row">
    <cad-bar><cad-combo class="w1" label="工作空间" value="AutoCAD 经典"></cad-combo><cad-tool name="gear"></cad-tool><cad-tool name="gearsave"></cad-tool></cad-bar>
    <cad-bar tools="layerprops"><cad-combo class="layer" label="图层" value="0"><cad-icon name="bulb"></cad-icon><cad-icon name="sun"></cad-icon><cad-icon name="vpfreeze"></cad-icon><cad-icon name="lock"></cad-icon><cad-icon name="swatch"></cad-icon></cad-combo><cad-tool name="layercur"></cad-tool><cad-tool name="layerprev"></cad-tool><cad-tool name="layerstate"></cad-tool></cad-bar>
    <cad-bar><cad-combo class="color by" label="颜色" value="ByLayer"><cad-icon name="swatch"></cad-icon></cad-combo><cad-sep wide></cad-sep><cad-combo class="lt by" label="线型" value="ByLayer"><i></i></cad-combo><cad-sep wide></cad-sep><cad-combo class="lw by" label="线宽" value="ByLayer"><i></i></cad-combo><cad-sep wide></cad-sep><cad-combo class="bc" label="打印样式" value="BYCOLOR"></cad-combo></cad-bar>
  </div>
</div>
<div class="work">
  <cad-bar vertical class="draw" tools="line xline pline polygon rect arc circle cloud spline ellipse ellarc insert makeblock point hatch gradient region table mtext addsel"></cad-bar>
  <cad-view></cad-view>
  <div class="right"><cad-bar vertical class="mod" tools="erase copyobj mirror offset array move rotate scale stretch trim extend breakpt break join chamfer fillet blend explode"></cad-bar>
  <cad-bar vertical class="order" tools="front back above under | abc hatchback"></cad-bar></div>
</div>
<div class="dims"><cad-bar tools="dlinear daligned darc dord | dradius djog ddia dang | dquick dbase dcont dspace dbreak | tol cmark inspect djogl | dedit dtedit dupdate |"><cad-combo class="std" label="标注样式" value="ISO-25"></cad-combo><cad-tool name="dimstyle"></cad-tool></cad-bar></div>
<cad-command></cad-command>
<cad-status></cad-status>
<div class="task"></div>
<baidu-mark></baidu-mark>`);
</script>
</body>
</html>
